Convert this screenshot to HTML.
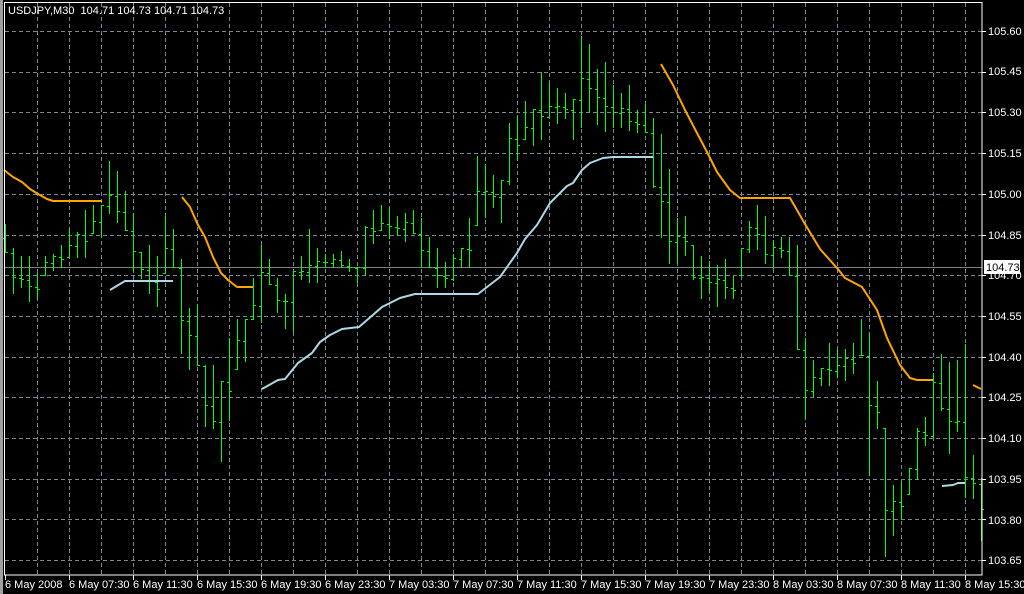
<!DOCTYPE html>
<html><head><meta charset="utf-8">
<style>
html,body{margin:0;padding:0;background:#000;width:1024px;height:594px;overflow:hidden}
svg{display:block}
text{font-family:"Liberation Sans",sans-serif;font-size:11px;fill:#fff}
</style></head>
<body>
<svg id="c" width="1024" height="594" viewBox="0 0 1024 594" xmlns="http://www.w3.org/2000/svg" shape-rendering="crispEdges">
<rect x="0" y="0" width="1024" height="594" fill="#000"/>
<rect x="0" y="0" width="3" height="594" fill="#a0a0a0"/>
<g id="grid" stroke="#778899" stroke-width="1" stroke-dasharray="4,3"></g>
<line x1="4" y1="267.5" x2="982" y2="267.5" stroke="#808080"/>
<g id="bars" stroke="#00ff00" stroke-width="1"></g>
<g fill="none" stroke-width="2" stroke-linejoin="round" shape-rendering="auto">
<polyline stroke="#ffa500" points="4,170 13,177 22,182 30,189 38,194 47,199 53,201 102,201"/>
<polyline stroke="#ffa500" points="182,197 190,207 198,225 205,237 213,257 221,273 228,280 237,287 253,287"/>
<polyline stroke="#ffa500" points="661,64 673,85 685,110 697,133 707,152 717,172 730,190 740,198 790,198 805,224 820,249 837,268 845,278 862,287 877,310 887,338 900,365 910,378 917,380 933,380"/>
<polyline stroke="#ffa500" points="973,385 981,389"/>
<polyline stroke="#add8e6" points="110,290 125,281 173,281"/>
<polyline stroke="#add8e6" points="262,389 278,380 285,379 298,363 312,353 320,342 330,335 342,329 359,327 382,307 400,298 415,294 478,294 500,277 517,253 525,239 537,225 550,203 567,186 573,183 582,170 590,163 603,158 613,157 653,157"/>
<polyline stroke="#add8e6" points="942,486 953,485 958,483 965,483"/>
</g>
<rect x="4.5" y="2.5" width="977.5" height="572.5" fill="none" stroke="#fff"/>
<g id="axis" stroke="#fff"></g>
<text x="8" y="14">USDJPY,M30 &#160;104.71 104.73 104.71 104.73</text>
<g id="plabels">
<text x="988" y="35">105.60</text>
<text x="988" y="75">105.45</text>
<text x="988" y="116">105.30</text>
<text x="988" y="157">105.15</text>
<text x="988" y="198">105.00</text>
<text x="988" y="239">104.85</text>
<text x="988" y="279">104.70</text>
<text x="988" y="320">104.55</text>
<text x="988" y="361">104.40</text>
<text x="988" y="401">104.25</text>
<text x="988" y="442">104.10</text>
<text x="988" y="483">103.95</text>
<text x="988" y="524">103.80</text>
<text x="988" y="564">103.65</text>
</g>
<rect x="984" y="260" width="36" height="14" fill="#fff"/>
<text x="986" y="271" style="fill:#000">104.73</text>
<g>
<text x="5" y="588">6 May 2008</text>
<text x="69" y="588">6 May 07:30</text>
<text x="133" y="588">6 May 11:30</text>
<text x="197" y="588">6 May 15:30</text>
<text x="261" y="588">6 May 19:30</text>
<text x="325" y="588">6 May 23:30</text>
<text x="389" y="588">7 May 03:30</text>
<text x="453" y="588">7 May 07:30</text>
<text x="517" y="588">7 May 11:30</text>
<text x="581" y="588">7 May 15:30</text>
<text x="645" y="588">7 May 19:30</text>
<text x="709" y="588">7 May 23:30</text>
<text x="773" y="588">8 May 03:30</text>
<text x="837" y="588">8 May 07:30</text>
<text x="901" y="588">8 May 11:30</text>
<text x="965" y="588">8 May 15:30</text>
</g>
</svg>
<script>
var NS="http://www.w3.org/2000/svg";
function L(g,x1,y1,x2,y2){var l=document.createElementNS(NS,"line");l.setAttribute("x1",x1);l.setAttribute("y1",y1);l.setAttribute("x2",x2);l.setAttribute("y2",y2);g.appendChild(l);}
var grid=document.getElementById("grid");
for(var x=37;x<982;x+=32)L(grid,x+.5,3,x+.5,575);
for(var k=0;k<14;k++){var y=Math.round(31+k*40.7)+.5;L(grid,5,y,982,y);}
var ax=document.getElementById("axis");
for(var k=0;k<14;k++){var y=Math.round(31+k*40.7)+.5;L(ax,982,y,986,y);}
for(var k=0;k<16;k++){var x=5+64*k+.5;L(ax,x,575,x,580);}
var B=[[224,252],[248,293],[256,287],[256,301],[273,298],[256,275],[254,270],[245,267],[229,257],[232,257],[210,257],[205,233],[205,237],[161,213],[171,222],[191,230],[213,271],[252,278],[245,293],[256,306],[216,273],[229,267],[259,353],[308,369],[305,365],[365,426],[365,428],[381,461],[338,420],[319,369],[319,361],[278,319],[245,322],[259,284],[278,312],[294,328],[271,331],[256,279],[229,282],[248,282],[254,267],[254,267],[251,267],[259,271],[267,282],[226,275],[210,243],[205,230],[207,238],[216,235],[213,241],[210,233],[218,267],[237,267],[248,287],[262,287],[254,280],[248,267],[218,267],[156,225],[164,217],[175,207],[180,222],[123,184],[116,160],[101,139],[109,145],[72,139],[82,117],[88,123],[93,118],[99,139],[36,127],[44,112],[69,124],[62,131],[85,127],[93,127],[85,130],[110,132],[104,132],[118,187],[134,237],[169,263],[218,263],[216,255],[245,279],[256,298],[261,293],[265,306],[259,298],[276,298],[248,275],[221,252],[205,249],[216,263],[240,268],[237,257],[237,275],[245,349],[338,418],[360,396],[368,385],[343,385],[349,377],[349,380],[343,373],[319,355],[333,475],[381,428],[428,556],[485,535],[482,519],[468,494],[428,479],[417,445],[373,437],[354,410],[362,453],[360,431],[344,497],[455,498],[478,540]];
var bg=document.getElementById("bars");var prev=null;
for(var i=0;i<B.length;i++){var x=5+8*i+.5,h=B[i][0],lo=B[i][1];
L(bg,x,h,x,lo+1);
var o=prev===null?(h+lo)/2:Math.min(Math.max(prev,h),lo);
var nx=B[i+1];var c=nx?Math.min(Math.max((nx[0]+nx[1])/2,h),lo):(h+lo)/2;
if(i%3==1)c=Math.round(h+(lo-h)*0.65);
o=Math.round(o)+.5;c=Math.round(c)+.5;
L(bg,x-2.5,o,x,o);L(bg,x,c,x+2.5,c);prev=c;}
</script>
</body></html>
